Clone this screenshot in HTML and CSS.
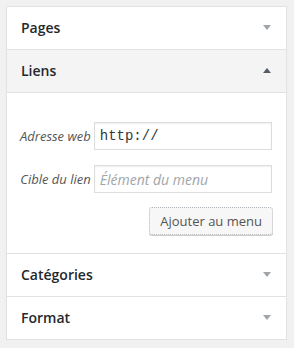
FILE: index.html
```html
<!DOCTYPE html>
<html lang="fr">
<head>
    <meta charset="UTF-8">
    <meta name="viewport" content="width=device-width, initial-scale=1.0">
    <title>Menus</title>
    <link rel="stylesheet" href="styles.css">
</head>
<body>
    <div class="accordion">
        <div class="section">
            <h3 class="section-title">Pages
                <svg class="arrow" width="8" height="5" viewBox="0 0 8 5"><polygon points="0,0 8,0 4,5"/></svg>
            </h3>
        </div>

        <div class="section open">
            <h3 class="section-title">Liens
                <svg class="arrow" width="8" height="5" viewBox="0 0 8 5"><polygon points="0,5 8,5 4,0"/></svg>
            </h3>
            <div class="section-content">
                <div class="link-form">
                    <label for="url">Adresse web</label>
                    <input type="text" id="url" class="code" value="http://">

                    <label for="link-text">Cible du lien</label>
                    <input type="text" id="link-text" placeholder="Élément du menu">
                </div>
                <div class="actions">
                    <button type="button" class="button">Ajouter au menu</button>
                </div>
            </div>
        </div>

        <div class="section">
            <h3 class="section-title">Catégories
                <svg class="arrow" width="8" height="5" viewBox="0 0 8 5"><polygon points="0,0 8,0 4,5"/></svg>
            </h3>
        </div>

        <div class="section">
            <h3 class="section-title">Format
                <svg class="arrow" width="8" height="5" viewBox="0 0 8 5"><polygon points="0,0 8,0 4,5"/></svg>
            </h3>
        </div>
    </div>
</body>
</html>
```

FILE: styles.css
```css
body {
    font-family: "Open Sans", Arial, sans-serif;
    margin: 0;
    padding: 6px 7px 0 6px;
    background-color: #f1f1f1;
    color: #23282d;
}
.accordion {
    width: 279px;
    background-color: #fff;
    border: 1px solid #e2e2e2;
    box-shadow: 0 1px 1px rgba(0,0,0,0.04);
}
.section {
    border-bottom: 1px solid #e2e2e2;
}
.section:last-child {
    border-bottom: none;
}
.section-title {
    display: flex;
    justify-content: space-between;
    align-items: center;
    margin: 0;
    padding: 10px 15px 11px 14px;
    font-size: 14px;
    line-height: 21px;
    font-weight: 600;
}
.arrow {
    fill: #a0a5aa;
}
.open .section-title {
    background-color: #f4f4f4;
    border-bottom: 1px solid #e2e2e2;
}
.open .arrow {
    fill: #555d66;
}
.section-content {
    padding: 29px 14px 18px 13px;
}
.link-form {
    display: grid;
    grid-template-columns: auto 1fr;
    column-gap: 3px;
    row-gap: 15px;
    align-items: center;
}
label {
    font-size: 13px;
    font-style: italic;
    color: #555;
    text-align: right;
    white-space: nowrap;
}
input {
    height: 28px;
    padding: 0 5px;
    border: 1px solid #ddd;
    box-shadow: inset 0 1px 2px rgba(0,0,0,0.07);
    font-family: "Open Sans", Arial, sans-serif;
    font-size: 14px;
    color: #32373c;
    box-sizing: border-box;
    width: 100%;
    margin: 0;
}
input.code {
    font-family: "Liberation Mono", "DejaVu Sans Mono", monospace;
    font-size: 14px;
}
input::placeholder {
    color: #a0a5aa;
    font-style: italic;
}
.actions {
    display: flex;
    justify-content: flex-end;
    margin-top: 14px;
}
.button {
    height: 28px;
    padding: 0 10px 1px;
    background-color: #f7f7f7;
    border: 1px dotted #b4b9be;
    border-radius: 3px;
    box-shadow: 0 1px 0 #ccc;
    font-family: "Open Sans", Arial, sans-serif;
    font-size: 13px;
    color: #555;
    cursor: pointer;
    margin-right: -1px;
}
```
